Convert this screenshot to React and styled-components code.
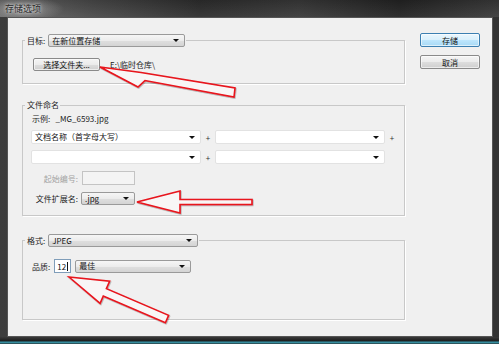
import React from 'react';
import styled, { createGlobalStyle } from 'styled-components';

const GlobalStyle = createGlobalStyle`
  *, *::before, *::after { box-sizing: border-box; }
  html, body { margin: 0; padding: 0; background: #222; }
  body {
    font-family: "Noto Sans CJK SC", "Liberation Sans", sans-serif;
    font-size: 8px;
    color: #1b1b1b;
  }
`;

// hand-drawn callouts: the first one is skewed, so its outline is given as is
const arrows = [
  { points: [[100, 67], [141, 72.5], [235, 88], [234, 97], [145, 80.5], [138, 87]] },
  { tip: [137, 202], tail: [252, 202], head: 43, wing: 11, shaft: 2.5 },
  { tip: [69, 277], tail: [167, 319], head: 39, wing: 12, shaft: 4 },
];

function arrowPoints({ points, tip, tail, head, wing, shaft }) {
  let pts = points;
  if (!pts) {
    const dx = tail[0] - tip[0];
    const dy = tail[1] - tip[1];
    const len = Math.hypot(dx, dy);
    const ux = dx / len, uy = dy / len;
    const nx = -uy, ny = ux;
    const bx = tip[0] + ux * head, by = tip[1] + uy * head;
    pts = [
      [tip[0], tip[1]],
      [bx + nx * wing, by + ny * wing],
      [bx + nx * shaft, by + ny * shaft],
      [tail[0] + nx * shaft, tail[1] + ny * shaft],
      [tail[0] - nx * shaft, tail[1] - ny * shaft],
      [bx - nx * shaft, by - ny * shaft],
      [bx - nx * wing, by - ny * wing],
    ];
  }
  return pts.map(p => p.map(v => v.toFixed(1)).join(',')).join(' ');
}

function Combo({ w, tone, children }) {
  return (
    <ComboBox $w={w} $tone={tone}>
      <span>{children}</span>
      <DownArrow />
    </ComboBox>
  );
}

function App() {
  return (
    <Screen>
      <GlobalStyle />
      <TitleBar>存储选项</TitleBar>
      <Middle>
        <Body>
          <LeftColumn>
            <Group>
              <Legend>
                <span>目标:</span>
                <Combo w={137} tone="gray">在新位置存储</Combo>
              </Legend>
              <GroupInner $pad="11px 10px 12px 10px">
                <Row $gap={10}>
                  <Button $w={67} $h={13}>选择文件夹...</Button>
                  <PathText>E:\临时仓库\</PathText>
                </Row>
              </GroupInner>
            </Group>

            <Group $top={15}>
              <Legend>
                <LegendText>文件命名</LegendText>
              </Legend>
              <GroupInner $pad="2px 0 10px 8px">
                <Example>示例:&nbsp;&nbsp;&nbsp;_MG_6593.jpg</Example>
                <Row $gap={0} $top={5}>
                  <Combo w={170} tone="white">文档名称（首字母大写）</Combo>
                  <Plus>+</Plus>
                  <Combo w={170} tone="white"></Combo>
                  <Plus>+</Plus>
                </Row>
                <Row $gap={0} $top={6}>
                  <Combo w={170} tone="white"></Combo>
                  <Plus>+</Plus>
                  <Combo w={170} tone="white"></Combo>
                </Row>
                <Row $gap={4} $top={7}>
                  <FieldLabel $disabled>起始编号:</FieldLabel>
                  <TextBox $w={53} $disabled />
                </Row>
                <Row $gap={3} $top={7}>
                  <FieldLabel>文件扩展名:</FieldLabel>
                  <Combo w={54} tone="gray">.jpg</Combo>
                </Row>
              </GroupInner>
            </Group>

            <Group $top={18}>
              <Legend>
                <span>格式:</span>
                <Combo w={150} tone="gray">JPEG</Combo>
              </Legend>
              <GroupInner $pad="12px 0 46px 9px">
                <Row $gap={4}>
                  <span>品质:</span>
                  <TextBox $w={17} $focus>
                    12<Caret />
                  </TextBox>
                  <Combo w={116} tone="gray">最佳</Combo>
                </Row>
              </GroupInner>
            </Group>
          </LeftColumn>

          <ButtonColumn>
            <Button $w={60} $h={14} $primary>存储</Button>
            <Button $w={60} $h={14}>取消</Button>
          </ButtonColumn>
        </Body>
      </Middle>
      <BottomFrame />

      <Overlay width="499" height="344" viewBox="0 0 499 344">
        <defs>
          <filter id="shade" x="-10%" y="-10%" width="120%" height="130%">
            <feDropShadow dx="0.6" dy="0.8" stdDeviation="0.6" floodColor="#000" floodOpacity="0.35" />
          </filter>
        </defs>
        {arrows.map((a, i) => (
          <polygon
            key={i}
            points={arrowPoints(a)}
            fill="#f8f6f6"
            stroke="#e8121b"
            strokeWidth="1.6"
            strokeLinejoin="miter"
            filter="url(#shade)"
          />
        ))}
      </Overlay>
    </Screen>
  );
}

export default App;

const Screen = styled.div`
  position: relative;
  width: 499px;
  height: 344px;
  overflow: hidden;
  display: flex;
  flex-direction: column;
  background: linear-gradient(90deg, #3d3d3d 0%, #2c2c2c 50%, #333 100%);
`;

const TitleBar = styled.div`
  height: 17px;
  flex: none;
  display: flex;
  align-items: center;
  padding-left: 5px;
  font-size: 9px;
  color: #2a2a2a;
  text-shadow: 0 0 3px rgba(255, 255, 255, 0.8), 0 0 6px rgba(255, 255, 255, 0.5);
  background:
    radial-gradient(ellipse 40px 12px at 24px 9px, rgba(190, 190, 190, 0.55), rgba(190, 190, 190, 0) 100%),
    linear-gradient(180deg, rgba(0, 0, 0, 0.15), rgba(255, 255, 255, 0.05)),
    linear-gradient(90deg, #6a6a6a 0%, #4b4b4b 18%, #2e2e2e 40%, #3a3a3a 60%, #242424 80%, #3b3b3b 100%);
`;

const Middle = styled.div`
  display: flex;
  height: 320px;
  flex: none;
  padding: 0 6px 0 7px;
`;

const Body = styled.div`
  flex: 1;
  display: flex;
  align-items: flex-start;
  gap: 15px;
  padding: 16px 12px 0 14px;
  background: #f0f0f0;
  border: 1px solid #555;
`;

const LeftColumn = styled.div`
  width: 383px;
  display: flex;
  flex-direction: column;
`;

const Group = styled.fieldset`
  margin: ${p => p.$top || 0}px 0 0 0;
  padding: 0;
  min-width: 0;
  border: 1px solid #c8c8c8;
  box-shadow: 1px 1px 0 #fff;
`;

const Legend = styled.legend`
  margin-left: 2px;
  padding: 0 1px 0 2px;
  display: flex;
  align-items: center;
  gap: 3px;
`;

const LegendText = styled.span`
  line-height: 12px;
`;

const GroupInner = styled.div`
  padding: ${p => p.$pad};
  display: flex;
  flex-direction: column;
`;

const Row = styled.div`
  display: flex;
  align-items: center;
  gap: ${p => p.$gap}px;
  margin-top: ${p => p.$top || 0}px;
`;

const Example = styled.div`
  height: 12px;
  line-height: 12px;
  margin-left: 1px;
`;

const PathText = styled.span`
  color: #222;
`;

const Plus = styled.span`
  width: 14px;
  text-align: center;
  font-size: 8px;
  color: #333;
`;

const FieldLabel = styled.span`
  width: 47px;
  text-align: right;
  color: ${p => (p.$disabled ? '#a3a3a3' : '#1b1b1b')};
`;

const ComboBox = styled.div`
  width: ${p => p.$w}px;
  height: ${p => (p.$tone === 'white' ? 14 : 13)}px;
  flex: none;
  display: flex;
  align-items: center;
  justify-content: space-between;
  padding: 0 5px 0 3px;
  border-radius: 2px;
  color: #111;
  border: 1px solid ${p => (p.$tone === 'white' ? '#e2e2e2' : '#9a9a9a')};
  background: ${p =>
    p.$tone === 'white'
      ? '#fff'
      : 'linear-gradient(180deg, #f6f6f6 0%, #ececec 50%, #dfdfdf 51%, #d4d4d4 100%)'};
  span {
    white-space: nowrap;
    line-height: 12px;
  }
`;

const DownArrow = styled.i`
  width: 0;
  height: 0;
  border-left: 3px solid transparent;
  border-right: 3px solid transparent;
  border-top: 3px solid #111;
`;

const TextBox = styled.div`
  width: ${p => p.$w}px;
  height: 14px;
  display: flex;
  align-items: center;
  padding-left: 2px;
  background: ${p => (p.$disabled ? '#f4f4f4' : '#fff')};
  border: 1px solid ${p => (p.$focus ? '#7f9db9' : '#c4c4c4')};
  color: #111;
`;

const Caret = styled.i`
  width: 1px;
  height: 9px;
  margin-left: 1px;
  background: #111;
`;

const ButtonColumn = styled.div`
  display: flex;
  flex-direction: column;
  gap: 8px;
  margin-top: -1px;
`;

const Button = styled.div`
  width: ${p => p.$w}px;
  height: ${p => p.$h}px;
  display: flex;
  align-items: center;
  justify-content: center;
  border-radius: 2px;
  white-space: nowrap;
  color: #111;
  border: 1px solid ${p => (p.$primary ? '#3c7fb1' : '#8a8a8a')};
  background: ${p =>
    p.$primary
      ? 'linear-gradient(180deg, #eaf6fd 0%, #d9f0fc 50%, #bee6fd 51%, #a7d9f5 100%)'
      : 'linear-gradient(180deg, #f4f4f4 0%, #ebebeb 50%, #dddddd 51%, #cfcfcf 100%)'};
  box-shadow: inset 0 0 0 1px rgba(255, 255, 255, 0.6);
`;

const BottomFrame = styled.div`
  flex: 1;
  background: linear-gradient(180deg, #3a3a3a 0%, #1e1e1e 55%, #2f7f90 70%, #3c97a8 85%, #1b1b1b 100%);
`;

const Overlay = styled.svg`
  position: absolute;
  left: 0;
  top: 0;
  pointer-events: none;
`;
